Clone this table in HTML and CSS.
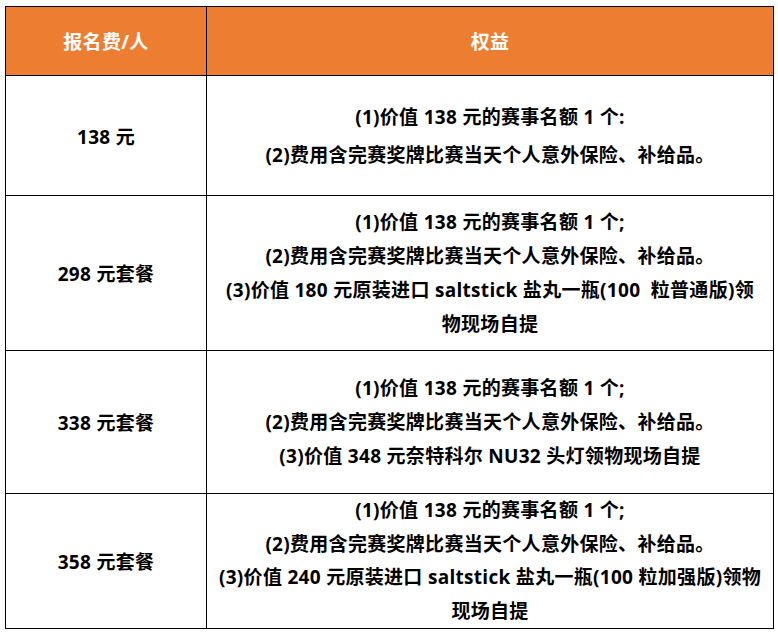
FILE: index.html
```html
<!DOCTYPE html>
<html lang="zh">
<head>
<meta charset="utf-8">
<link rel="stylesheet" href="styles.css">
</head>
<body>
<table class="fee-table">
  <colgroup><col class="col-fee"><col class="col-benefit"></colgroup>
  <thead>
    <tr class="head-row"><th>报名费/人</th><th>权益</th></tr>
  </thead>
  <tbody>
    <tr class="row-1">
      <td class="fee">138 元</td>
      <td class="benefit">(1)价值 138 元的赛事名额 1 个:<br>(2)费用含完赛奖牌比赛当天个人意外保险、补给品。</td>
    </tr>
    <tr class="row-2">
      <td class="fee">298 元套餐</td>
      <td class="benefit">(1)价值 138 元的赛事名额 1 个;<br>(2)费用含完赛奖牌比赛当天个人意外保险、补给品。<br>(3)价值 180 元原装进口 saltstick 盐丸一瓶(100&nbsp; 粒普通版)领<br>物现场自提</td>
    </tr>
    <tr class="row-3">
      <td class="fee">338 元套餐</td>
      <td class="benefit">(1)价值 138 元的赛事名额 1 个;<br>(2)费用含完赛奖牌比赛当天个人意外保险、补给品。<br>(3)价值 348 元奈特科尔 NU32 头灯领物现场自提</td>
    </tr>
    <tr class="row-4">
      <td class="fee">358 元套餐</td>
      <td class="benefit">(1)价值 138 元的赛事名额 1 个;<br>(2)费用含完赛奖牌比赛当天个人意外保险、补给品。<br>(3)价值 240 元原装进口 saltstick 盐丸一瓶(100 粒加强版)领物<br>现场自提</td>
    </tr>
  </tbody>
</table>
</body>
</html>
```
FILE: styles.css
```css
html, body {
  margin: 0;
  padding: 0;
  background: #ffffff;
}
body {
  padding: 6px 0 0 5px;
  font-family: "Open Sans", "Noto Sans CJK SC", sans-serif;
  font-weight: bold;
  color: #000;
}
.fee-table {
  border-collapse: collapse;
  table-layout: fixed;
  width: 768px;
}
.col-fee { width: 201px; }
.col-benefit { width: 567px; }
.fee-table th,
.fee-table td {
  border: 1px solid #000;
  text-align: center;
  vertical-align: middle;
  padding: 0;
  font-size: 19px;
  letter-spacing: 0.3px;
  white-space: nowrap;
}
.head-row th {
  background: #ED7D31;
  color: #fff;
  height: 68px;
}
.benefit { line-height: 34px; }
.row-1 td { height: 119px; }
.row-1 .benefit { line-height: 38px; }
.row-2 td { height: 154px; }
.row-3 td { height: 142px; }
.row-4 td { height: 134px; }
.row-4 .benefit { line-height: 33.5px; }
```
